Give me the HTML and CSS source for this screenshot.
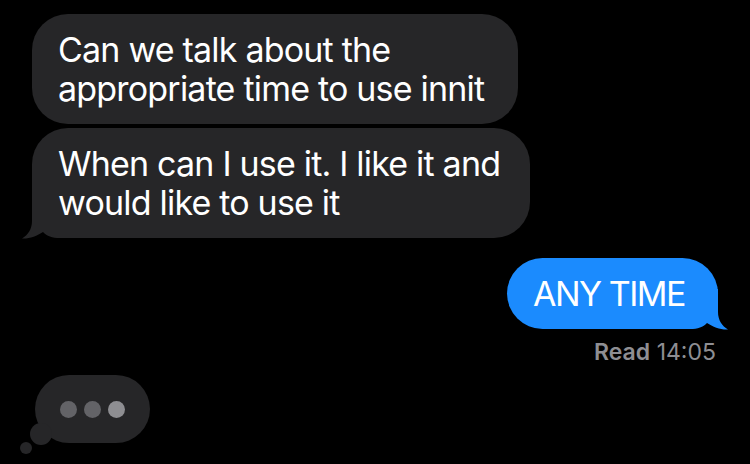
FILE: index.html
```html
<!DOCTYPE html>
<html lang="en">
<head>
<meta charset="utf-8">
<title>Messages</title>
<link rel="stylesheet" href="styles.css">
</head>
<body>
<div class="thread">
  <div class="msg in w1">Can we talk about the<br>appropriate time to use innit</div>
  <div class="msg in w2">When can I use it. I like it and<br>would like to use it<svg class="tail tail-in" viewBox="0 0 50 42" width="50" height="42"><path d="M10 0 L10 23 C10 31 6 37 0 40.5 C7 41 15 38 21 34 C25 38 30 40 38 40 L50 40 L50 0 Z"/></svg></div>
  <div class="msg out">ANY TIME<svg class="tail tail-out" viewBox="0 0 50 42" width="50" height="42"><path d="M10 0 L10 23 C10 31 6 37 0 40.5 C7 41 15 38 21 34 C25 38 30 40 38 40 L50 40 L50 0 Z"/></svg></div>
  <div class="receipt"><b>Read</b> 14:05</div>
  <div class="typing"><span class="dot"></span><span class="dot"></span><span class="dot lit"></span></div>
</div>
</body>
</html>
```
FILE: styles.css
```css
html, body {
  margin: 0;
  background: #000;
}
body {
  font-family: Inter, "Liberation Sans", sans-serif;
  width: 750px;
  height: 464px;
  overflow: hidden;
}
.thread {
  display: flex;
  flex-direction: column;
  padding: 14px 32px 0 32px;
}
.msg {
  box-sizing: border-box;
  position: relative;
  isolation: isolate;
  font-size: 34px;
  line-height: 39px;
  letter-spacing: -0.8px;
  padding: 16px 0 16px 26px;
  border-radius: 36px;
  color: #fff;
  white-space: nowrap;
}
.in {
  align-self: flex-start;
  background: #262628;
}
.w1 { width: 486px; }
.w2 { width: 498px; margin-top: 4px; }
.out {
  align-self: flex-end;
  background: #1b8bfe;
  width: 211px;
  margin-top: 20px;
  letter-spacing: -1.5px;
}
.tail {
  position: absolute;
  bottom: -2px;
  z-index: -1;
}
.tail-in {
  left: -10px;
  fill: #262628;
}
.tail-out {
  right: -10px;
  fill: #1b8bfe;
  transform: scaleX(-1);
}
.receipt {
  align-self: flex-end;
  margin-top: 10px;
  margin-right: 2px;
  font-size: 23px;
  line-height: 26px;
  color: #8e8e93;
}
.receipt b { font-weight: 600; }
.typing {
  align-self: flex-start;
  position: relative;
  margin-left: 3px;
  margin-top: 10px;
  width: 115px;
  height: 68px;
  border-radius: 34px;
  background: #262628;
  display: flex;
  align-items: center;
  justify-content: center;
  gap: 7px;
}
.typing::before {
  content: "";
  position: absolute;
  left: -5px;
  top: 48px;
  width: 22px;
  height: 22px;
  border-radius: 50%;
  background: #262628;
}
.typing::after {
  content: "";
  position: absolute;
  left: -15px;
  top: 67px;
  width: 12px;
  height: 12px;
  border-radius: 50%;
  background: #262628;
}
.dot {
  width: 17px;
  height: 17px;
  border-radius: 50%;
  background: #636367;
}
.dot.lit { background: #8e8e92; }
```
